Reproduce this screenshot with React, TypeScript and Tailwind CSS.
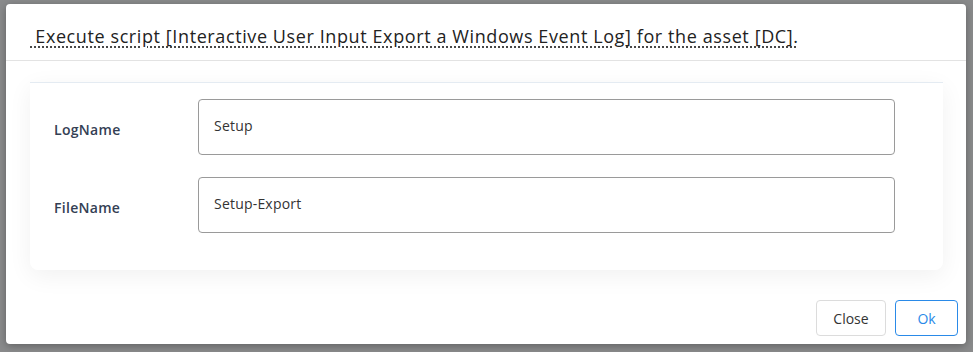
import React from 'react';

const font = { fontFamily: '"Open Sans", "Liberation Sans", sans-serif' };

function Field({ label, value }: { label: string; value: string }) {
  return (
    <div className="flex items-center h-[56px]">
      <label className="w-[168px] pl-[24px] pt-[4px] text-[14px] font-semibold text-[#344054] tracking-[0.3px]">{label}</label>
      <div className="w-[697px] h-[56px] rounded-[4px] border border-[#9a9a9a] px-[15px] pt-[15px] text-[14px] text-[#333] tracking-[0.2px]">
        {value}
      </div>
    </div>
  );
}

export default function App() {
  return (
    <div className="w-[973px] h-[352px] bg-[#8a8b8c] overflow-hidden relative" style={font}>
      <div className="absolute left-[6px] top-[4px] w-[960px] h-[340px] bg-white rounded-[4px] shadow-[0_2px_8px_rgba(0,0,0,0.3)] flex flex-col">
        <div className="h-[57px] border-b border-[#e3e3e3] px-[24px] flex items-center pt-[8px]">
          <h3 className="text-[18px] text-[#222] underline decoration-dotted decoration-[#333] underline-offset-[4px] whitespace-nowrap tracking-[0.6px]">
            &nbsp;Execute script [Interactive User Input Export a Windows Event Log] for the asset [DC].
          </h3>
        </div>
        <div className="px-[24px] pt-[21px]">
          <div className="w-[913px] h-[188px] border-t border-[#e4ebf2] rounded-b-[8px] shadow-[0_6px_24px_rgba(0,0,0,0.06)] flex flex-col gap-[22px] pt-[16px]">
            <Field label="LogName" value="Setup" />
            <Field label="FileName" value="Setup-Export" />
          </div>
        </div>
        <div className="flex justify-end gap-[9px] pr-[8px] mt-[30px]">
          <button className="w-[70px] h-[36px] rounded-[4px] border border-[#dcdcdc] text-[14px] text-[#333] bg-white">Close</button>
          <button className="w-[63px] h-[36px] rounded-[4px] border border-[#2a8ae8] text-[14px] text-[#2a8ae8] bg-white">Ok</button>
        </div>
      </div>
    </div>
  );
}
